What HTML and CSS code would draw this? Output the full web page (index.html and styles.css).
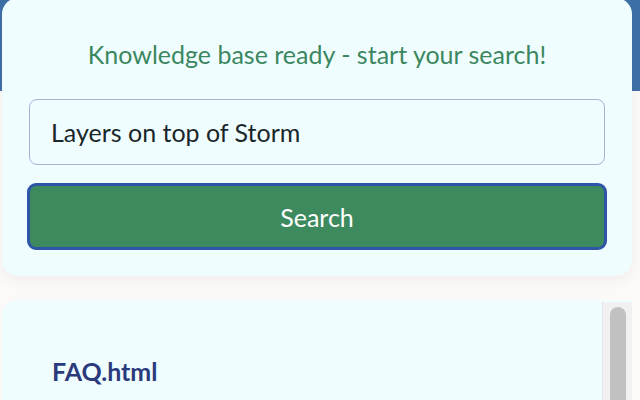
FILE: index.html
```html
<!DOCTYPE html>
<html lang="en">
<head>
<meta charset="utf-8">
<title>Knowledge base search</title>
<link rel="stylesheet" href="styles.css">
</head>
<body>
<main class="page">
  <section class="search-card">
    <p class="status">Knowledge base ready - start your search!</p>
    <form class="search-form">
      <input class="query" type="text" value="Layers on top of Storm">
      <button class="search-btn" type="button">Search</button>
    </form>
  </section>
  <section class="results-card">
    <div class="results">
      <h3 class="result-title">FAQ.html</h3>
    </div>
    <div class="scrollbar"><div class="thumb"></div></div>
  </section>
</main>
</body>
</html>
```

FILE: styles.css
```css
* { box-sizing: border-box; }
html, body { margin: 0; padding: 0; }
body {
  width: 640px;
  height: 400px;
  overflow: hidden;
  font-family: Lato, "Open Sans", sans-serif;
  background: linear-gradient(#3d6fa7 0, #3d6fa7 91px, #fcf9f9 91px);
}
.page {
  display: flex;
  flex-direction: column;
  gap: 24px;
  padding-left: 2px;
  margin-top: -2px;
}
.search-card {
  width: 630px;
  background: #f0fdff;
  border-radius: 16px;
  box-shadow: 0 4px 14px rgba(120, 90, 90, 0.07);
  padding: 41px 27px 26px 27px;
}
.status {
  margin: 0 0 30px 0;
  text-align: center;
  color: #3b875f;
  font-size: 25px;
  line-height: 30px;
}
.search-form {
  display: flex;
  flex-direction: column;
  gap: 18px;
}
.query {
  width: 576px;
  height: 66px;
  border: 1px solid #a4b3d4;
  border-radius: 8px;
  background: #f0fdff;
  padding: 0 21px;
  font-family: Lato, sans-serif;
  font-size: 25px;
  color: #1a2729;
}
.search-btn {
  width: 580px;
  height: 67px;
  margin-left: -2px;
  border: 3px solid #2e55a8;
  border-radius: 9px;
  background: #3e8a5f;
  color: #ffffff;
  font-family: Lato, sans-serif;
  font-size: 25px;
}
.results-card {
  width: 630px;
  height: 100px;
  display: flex;
  background: #f0fdff;
  border-radius: 16px 0 0 0;
}
.results {
  flex: 1;
  padding: 56px 0 0 50px;
}
.result-title {
  margin: 0;
  color: #2b3a7c;
  font-size: 25px;
  font-weight: 700;
  line-height: 30px;
}
.scrollbar {
  width: 30px;
  margin-top: 2px;
  background: #f1f1f1;
  border-left: 1px solid #e6e6e6;
  padding: 5px 6px 0 7px;
}
.thumb {
  height: 200px;
  border-radius: 8px;
  background: #c1c1c1;
}
```
